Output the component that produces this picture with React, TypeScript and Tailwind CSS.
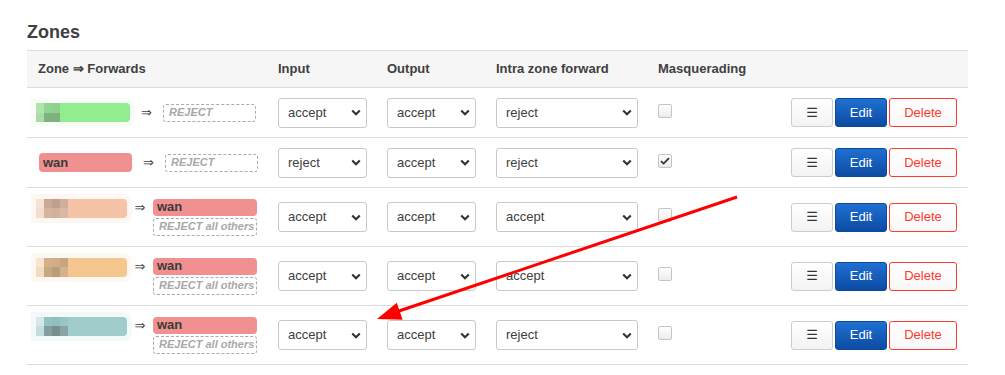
type Zone = {
  kind: 'blur' | 'wan';
  base?: string;
  ring?: string;
  top?: string[];
  bottom?: string[];
};

interface Row {
  zone: Zone;
  forwards: boolean;
  input: string;
  output: string;
  intra: string;
  masq: boolean;
}

const rows: Row[] = [
  {
    zone: {
      kind: 'blur',
      base: 'bg-[#90ee90]',
      ring: 'shadow-[0_0_0_5px_#f8fdf8]',
      top: ['#ade6ad', '#92d492', '#8ed08e'],
      bottom: ['#a9dca9', '#80b280', '#80b280'],
    },
    forwards: false,
    input: 'accept',
    output: 'accept',
    intra: 'reject',
    masq: false,
  },
  { zone: { kind: 'wan' }, forwards: false, input: 'reject', output: 'accept', intra: 'reject', masq: true },
  {
    zone: {
      kind: 'blur',
      base: 'bg-[#f5c4a6]',
      ring: 'shadow-[0_0_0_5px_#fdf7f3]',
      top: ['#f8e2d4', '#c8a896', '#bda08f', '#d0ae9a'],
      bottom: ['#f6dccc', '#d6b4a0', '#d2b09e', '#dcb8a4'],
    },
    forwards: true,
    input: 'accept',
    output: 'accept',
    intra: 'accept',
    masq: false,
  },
  {
    zone: {
      kind: 'blur',
      base: 'bg-[#f5c78e]',
      ring: 'shadow-[0_0_0_5px_#fdf8f1]',
      top: ['#f8e6cc', '#d6b088', '#d2ae86', '#c6a680'],
      bottom: ['#f5dcc0', '#c8a880', '#b89c7e', '#d6b28a'],
    },
    forwards: true,
    input: 'accept',
    output: 'accept',
    intra: 'accept',
    masq: false,
  },
  {
    zone: {
      kind: 'blur',
      base: 'bg-[#a0cccc]',
      ring: 'shadow-[0_0_0_5px_#f3f9f9]',
      top: ['#d4e8e8', '#94c2c2', '#92bebe', '#9cc4c4'],
      bottom: ['#c4dede', '#849e9e', '#768e8e', '#8aa4a4'],
    },
    forwards: true,
    input: 'accept',
    output: 'accept',
    intra: 'reject',
    masq: false,
  },
];

function Chevron() {
  return (
    <svg width="10" height="7" viewBox="0 0 10 7" className="shrink-0">
      <path d="M1.2 1.4 5 5.2 8.8 1.4" fill="none" stroke="#333" strokeWidth="2.1" />
    </svg>
  );
}

function Select({ value, width }: { value: string; width: string }) {
  return (
    <div
      className={`${width} h-[30px] flex items-center justify-between pl-[9px] pr-[5px] border border-[#c8c8c8] rounded-[3px] bg-white text-[13px] text-[#404040]`}
    >
      <span>{value}</span>
      <Chevron />
    </div>
  );
}

function BlurBadge({ zone, wide }: { zone: Zone; wide: boolean }) {
  return (
    <div className={`${wide ? 'w-[94px]' : 'w-[91px]'} h-[19px] flex flex-col rounded-r-[4px] overflow-hidden ${zone.base} ${zone.ring}`}>
      {[zone.top!, zone.bottom!].map((cells, i) => (
        <div key={i} className="flex h-1/2">
          {cells.map((c, j) => (
            <div key={j} className="w-[8px] h-full" style={{ backgroundColor: c }} />
          ))}
        </div>
      ))}
    </div>
  );
}

function RejectBox({ label, className }: { label: string; className: string }) {
  return (
    <div
      className={`${className} flex items-center pl-[5px] border border-dashed border-[#aaa] rounded-[3px] text-[11px] font-bold italic text-[#a8a8a8]`}
    >
      {label}
    </div>
  );
}

function ZoneCell({ row }: { row: Row }) {
  if (!row.forwards) {
    return (
      <div className="flex items-center">
        {row.zone.kind === 'wan' ? (
          <div className="ml-[3px] w-[93px] h-[19px] flex items-center pl-[4px] rounded-[4px] bg-[#f09090] text-[13px] font-bold text-[#3a3a3a]">
            wan
          </div>
        ) : (
          <BlurBadge zone={row.zone} wide />
        )}
        <span className="w-[33px] text-center text-[13px] text-[#404040] font-['DejaVu_Sans',sans-serif]">⇒</span>
        <RejectBox label="REJECT" className="w-[93px] h-[18px]" />
      </div>
    );
  }
  return (
    <div className="flex items-start">
      <BlurBadge zone={row.zone} wide={false} />
      <span className="w-[26px] text-center text-[13px] leading-[17px] text-[#404040] font-['DejaVu_Sans',sans-serif]">⇒</span>
      <div className="flex flex-col gap-[2px]">
        <div className="w-[104px] h-[17px] flex items-center pl-[4px] rounded-[4px] bg-[#f09090] text-[13px] font-bold text-[#3a3a3a]">
          wan
        </div>
        <RejectBox label="REJECT all others" className="w-[104px] h-[18px]" />
      </div>
    </div>
  );
}

function Checkbox({ checked }: { checked: boolean }) {
  return (
    <div className="w-[14px] h-[14px] flex items-center justify-center border border-[#c4c4c4] rounded-[2px] bg-gradient-to-b from-white to-[#ececec]">
      {checked && (
        <svg width="10" height="8" viewBox="0 0 10 8">
          <path d="M1 4.2 3.6 6.6 9 1.2" fill="none" stroke="#333" strokeWidth="1.8" />
        </svg>
      )}
    </div>
  );
}

function Actions() {
  return (
    <div className="flex gap-[2px] text-[13px]">
      <button className="w-[42px] h-[29px] border border-[#cccccc] rounded-[3px] bg-gradient-to-b from-white to-[#f3f3f3] text-[#333] font-['DejaVu_Sans',sans-serif]">
        ☰
      </button>
      <button className="w-[52px] h-[29px] border border-[#0b4a99] rounded-[3px] bg-gradient-to-b from-[#1f70d2] to-[#0c4ba3] text-white">
        Edit
      </button>
      <button className="w-[68px] h-[29px] border border-[#ff3a2e] rounded-[3px] bg-gradient-to-b from-white to-[#f8f8f8] text-[#ff3a2e]">
        Delete
      </button>
    </div>
  );
}

const grid = 'grid grid-cols-[242px_109px_109px_162px_1fr_auto] items-center';

export default function App() {
  return (
    <div className="relative w-[1005px] h-[375px] overflow-hidden bg-white font-['Liberation_Sans',Arial,sans-serif] text-[#404040]">
      <div className="pl-[27px] pr-[37px]">
        <h2 className="pt-[22px] h-[42px] mb-[8px] text-[18px] leading-[20px] font-bold text-[#404040]">Zones</h2>

        <div className={`${grid} h-[38px] border-y border-[#dcdcdc] bg-[#f6f6f6] text-[13px] font-bold`}>
          <div className="pl-[11px]">Zone ⇒ Forwards</div>
          <div className="pl-[9px]">Input</div>
          <div className="pl-[9px]">Output</div>
          <div className="pl-[9px]">Intra zone forward</div>
          <div className="pl-[9px]">Masquerading</div>
          <div />
        </div>

        {rows.map((row, i) => (
          <div key={i} className={`${grid} ${row.forwards ? 'h-[59px]' : 'h-[50px]'} border-b border-[#dcdcdc]`}>
            <div className="pl-[9px]">
              <ZoneCell row={row} />
            </div>
            <div className="pl-[9px]">
              <Select value={row.input} width="w-[89px]" />
            </div>
            <div className="pl-[9px]">
              <Select value={row.output} width="w-[89px]" />
            </div>
            <div className="pl-[9px]">
              <Select value={row.intra} width="w-[142px]" />
            </div>
            <div className="pl-[9px] -mt-[4px]">
              <Checkbox checked={row.masq} />
            </div>
            <div className="pr-[11px]">
              <Actions />
            </div>
          </div>
        ))}
      </div>

      <svg className="absolute inset-0 pointer-events-none" width="1005" height="375">
        <line x1="737" y1="197" x2="396" y2="312" stroke="#ff0000" strokeWidth="3" />
        <polygon points="377,319 396.8,302.8 402.6,319.8" fill="#ff0000" />
      </svg>
    </div>
  );
}
